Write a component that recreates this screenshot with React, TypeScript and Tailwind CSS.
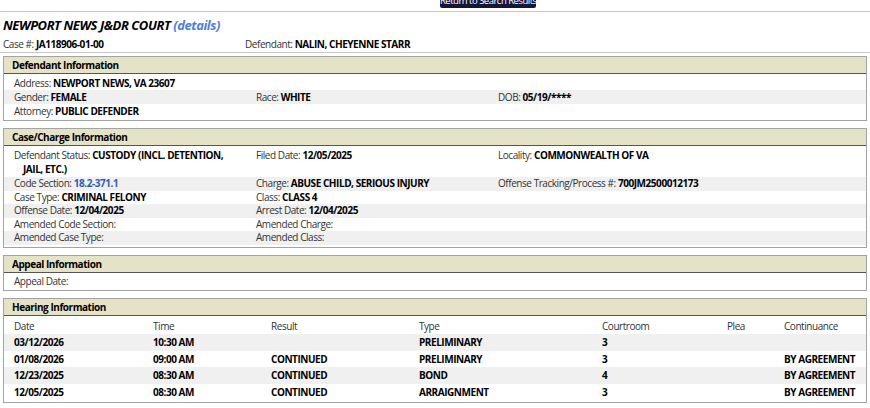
import React from "react";

const font = { fontFamily: '"Open Sans", "Noto Sans", sans-serif' };

function Field({ label, value, link }: { label: string; value?: string; link?: boolean }) {
  return (
    <div className="pl-[10px] pr-2">
      <span className="text-[#333]">{label}</span>{" "}
      {value && <span className={link ? "font-bold text-[#2f5fb3]" : "font-bold text-black"}>{value}</span>}
    </div>
  );
}

function Section({ title, children }: { title: string; children: React.ReactNode }) {
  return (
    <div className="mx-[3px] border border-[#a3a3a3]">
      <div className="h-[17px] bg-[#e5e3c7] border-b border-[#555] pl-[8px] font-bold text-black leading-[16px]">
        {title}
      </div>
      <div className="pt-[2px] pb-[2px]">{children}</div>
    </div>
  );
}

const hearings = [
  ["03/12/2026", "10:30 AM", "", "PRELIMINARY", "3", "", ""],
  ["01/08/2026", "09:00 AM", "CONTINUED", "PRELIMINARY", "3", "", "BY AGREEMENT"],
  ["12/23/2025", "08:30 AM", "CONTINUED", "BOND", "4", "", "BY AGREEMENT"],
  ["12/05/2025", "08:30 AM", "CONTINUED", "ARRAIGNMENT", "3", "", "BY AGREEMENT"],
];

const hearingCols = "grid grid-cols-[139px_118px_148px_183px_125px_57px_1fr] pl-[10px]";

export default function App() {
  return (
    <div
      className="w-[870px] h-[408px] overflow-hidden bg-white text-[10px] tracking-[-0.45px] text-[#222]"
      style={font}
    >
      <div className="h-[12px] border-b border-[#c8c8c8] relative">
        <button className="absolute left-[440px] top-[-6px] h-[14px] w-[96px] rounded-[2px] bg-[#16163d] text-white text-[9.5px] tracking-[-0.5px] leading-[14px] whitespace-nowrap">
          Return to Search Results
        </button>
      </div>

      <div className="pl-[3px] pt-[4px] h-[22px] text-[13px] font-bold italic text-black leading-[18px]">
        NEWPORT NEWS J&amp;DR COURT <span className="text-[#4f80d6]">(details)</span>
      </div>

      <div className="flex h-[19px] border-b border-[#c8c8c8] pl-[3px] pt-[1px] leading-[18px]">
        <div className="w-[242px]">
          <span className="text-[#333]">Case #:</span> <span className="font-bold text-black">JA118906-01-00</span>
        </div>
        <div>
          <span className="text-[#333]">Defendant:</span>{" "}
          <span className="font-bold text-black">NALIN, CHEYENNE STARR</span>
        </div>
      </div>

      <div className="flex flex-col gap-[7px] pt-[3px]">
        <Section title="Defendant Information">
          <div className="leading-[14px]">
            <div className="grid grid-cols-[242px_242px_1fr]">
              <Field label="Address:" value="NEWPORT NEWS, VA 23607" />
              <div />
              <div />
            </div>
            <div className="grid grid-cols-[242px_242px_1fr] bg-[#f0f0f0]">
              <Field label="Gender:" value="FEMALE" />
              <Field label="Race:" value="WHITE" />
              <Field label="DOB:" value="05/19/****" />
            </div>
            <div className="grid grid-cols-[242px_242px_1fr]">
              <Field label="Attorney:" value="PUBLIC DEFENDER" />
              <div />
              <div />
            </div>
          </div>
        </Section>

        <Section title="Case/Charge Information">
          <div className="leading-[13.5px]">
            <div className="grid grid-cols-[242px_242px_1fr] py-[1px]">
              <div className="pl-[10px] pr-2">
                <div>
                  <span className="text-[#333]">Defendant Status:</span>{" "}
                  <span className="font-bold text-black">CUSTODY (INCL. DETENTION,</span>
                </div>
                <div className="pl-[9px] font-bold text-black">JAIL, ETC.)</div>
              </div>
              <Field label="Filed Date:" value="12/05/2025" />
              <Field label="Locality:" value="COMMONWEALTH OF VA" />
            </div>
            <div className="grid grid-cols-[242px_242px_1fr] bg-[#f0f0f0]">
              <Field label="Code Section:" value="18.2-371.1" link />
              <Field label="Charge:" value="ABUSE CHILD, SERIOUS INJURY" />
              <Field label="Offense Tracking/Process #:" value="700JM2500012173" />
            </div>
            <div className="grid grid-cols-[242px_242px_1fr]">
              <Field label="Case Type:" value="CRIMINAL FELONY" />
              <Field label="Class:" value="CLASS 4" />
              <div />
            </div>
            <div className="grid grid-cols-[242px_242px_1fr] bg-[#f0f0f0]">
              <Field label="Offense Date:" value="12/04/2025" />
              <Field label="Arrest Date:" value="12/04/2025" />
              <div />
            </div>
            <div className="grid grid-cols-[242px_242px_1fr]">
              <Field label="Amended Code Section:" />
              <Field label="Amended Charge:" />
              <div />
            </div>
            <div className="grid grid-cols-[242px_242px_1fr] bg-[#f0f0f0]">
              <Field label="Amended Case Type:" />
              <Field label="Amended Class:" />
              <div />
            </div>
          </div>
        </Section>

        <Section title="Appeal Information">
          <div className="leading-[13px]">
            <Field label="Appeal Date:" />
          </div>
        </Section>

        <Section title="Hearing Information">
          <div className="leading-[16.5px]">
            <div className={hearingCols + " text-[#333]"}>
              <div>Date</div>
              <div>Time</div>
              <div>Result</div>
              <div>Type</div>
              <div>Courtroom</div>
              <div>Plea</div>
              <div>Continuance</div>
            </div>
            {hearings.map((h, i) => (
              <div key={i} className={hearingCols + " font-bold text-black " + (i % 2 === 0 ? "bg-[#f0f0f0]" : "")}>
                {h.map((c, j) => (
                  <div key={j}>{c}</div>
                ))}
              </div>
            ))}
          </div>
        </Section>
      </div>
    </div>
  );
}
